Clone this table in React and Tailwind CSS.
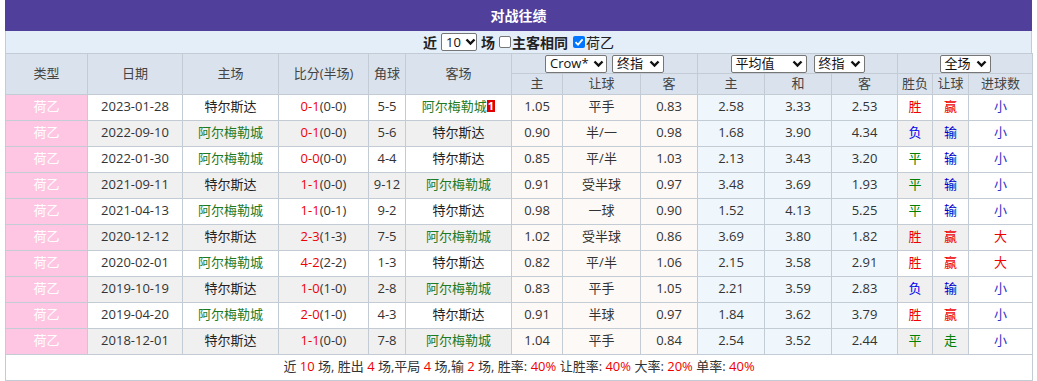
import React from 'react';

const rows = [
    ['2023-01-28', '特尔斯达', '0-1', '(0-0)', '5-5', '阿尔梅勒城', '1.05', '平手', '0.83', '2.58', '3.33', '2.53', '胜', '赢', '小', true],
    ['2022-09-10', '阿尔梅勒城', '0-1', '(0-0)', '5-6', '特尔斯达', '0.90', '半/一', '0.98', '1.68', '3.90', '4.34', '负', '输', '小'],
    ['2022-01-30', '阿尔梅勒城', '0-0', '(0-0)', '4-4', '特尔斯达', '0.85', '平/半', '1.03', '2.13', '3.43', '3.20', '平', '输', '小'],
    ['2021-09-11', '特尔斯达', '1-1', '(0-0)', '9-12', '阿尔梅勒城', '0.91', '受半球', '0.97', '3.48', '3.69', '1.93', '平', '输', '小'],
    ['2021-04-13', '阿尔梅勒城', '1-1', '(0-1)', '9-2', '特尔斯达', '0.98', '一球', '0.90', '1.52', '4.13', '5.25', '平', '输', '小'],
    ['2020-12-12', '特尔斯达', '2-3', '(1-3)', '7-5', '阿尔梅勒城', '1.02', '受半球', '0.86', '3.69', '3.80', '1.82', '胜', '赢', '大'],
    ['2020-02-01', '阿尔梅勒城', '4-2', '(2-2)', '1-3', '特尔斯达', '0.82', '平/半', '1.06', '2.15', '3.58', '2.91', '胜', '赢', '大'],
    ['2019-10-19', '特尔斯达', '1-0', '(1-0)', '2-8', '阿尔梅勒城', '0.83', '平手', '1.05', '2.21', '3.59', '2.83', '负', '输', '小'],
    ['2019-04-20', '阿尔梅勒城', '2-0', '(1-0)', '4-3', '特尔斯达', '0.91', '半球', '0.97', '1.84', '3.62', '3.79', '胜', '赢', '小'],
    ['2018-12-01', '特尔斯达', '1-1', '(0-0)', '7-8', '阿尔梅勒城', '1.04', '平手', '0.84', '2.54', '3.52', '2.44', '平', '走', '小'],
];

const widths = [82, 95, 96, 90, 37, 106, 51, 78, 57, 67, 67, 66, 35, 36, 64];

const resultColor = {
    '胜': 'text-[#ee0000]',
    '赢': 'text-[#ee0000]',
    '负': 'text-[#0000ee]',
    '输': 'text-[#0000cc]',
    '平': 'text-[#008000]',
    '走': 'text-[#008000]',
    '大': 'text-[#ee0000]',
    '小': 'text-[#3333cc]',
};

const Chevron = () => (
    <svg width="11" height="8" viewBox="0 0 11 8" className="ml-1 shrink-0">
        <polyline points="1.5,1.5 5.5,5.5 9.5,1.5" fill="none" stroke="#111" strokeWidth="2.4"/>
    </svg>
);

const Select = ({label, className = ''}) => (
    <span className={"inline-flex items-center justify-between h-[18px] pl-1 pr-[3px] bg-white border border-[#767676] rounded-[2px] text-[13px] leading-none text-[#111] align-middle " + className}>
        {label}<Chevron/>
    </span>
);

const Team = ({name}) => (
    <span className={name === '阿尔梅勒城' ? 'text-[#1f7a1f]' : 'text-[#222]'}>{name}</span>
);

const App = () => {
    const td = "border border-[#c3cbd4] text-center p-0";
    return (
        <div className="w-[1037px] h-[381px] bg-white pl-[5px] pr-[5px]" style={{fontFamily: '"Open Sans", "Noto Sans CJK SC", sans-serif'}}>
            <div className="w-[1027px] h-[31px] bg-[#51409b] flex items-center justify-center text-white font-bold text-[14px]">
                对战往绩
            </div>
            <div className="w-[1027px] h-[22px] bg-[#e3eef9] flex items-center justify-center text-[14px] text-[#222] border-x border-[#c3cbd4]">
                <span className="font-bold">近</span>
                <Select label="10" className="mx-1 w-[36px] h-[17px]"/>
                <span className="font-bold">场</span>
                <span className="ml-[4px] mr-[1px] w-[12px] h-[12px] border border-[#767676] rounded-[2px] bg-white"></span>
                <span className="font-bold">主客相同</span>
                <span className="ml-[5px] mr-[1px] w-[12px] h-[12px] rounded-[2px] bg-[#0075ff] flex items-center justify-center">
                    <svg width="10" height="10" viewBox="0 0 10 10">
                        <polyline points="1.5,5.2 4,7.6 8.6,2.4" fill="none" stroke="#fff" strokeWidth="1.8"/>
                    </svg>
                </span>
                <span>荷乙</span>
            </div>
            <table className="table-fixed border-collapse w-[1027px] text-[13px] text-[#333]">
                <colgroup>
                    {widths.map((w, i) => <col key={i} style={{width: w}}/>)}
                </colgroup>
                <thead>
                <tr className="h-[20px] bg-[#dae3ed] text-[#444]">
                    <th rowSpan={2} className={td + " font-normal"}>类型</th>
                    <th rowSpan={2} className={td + " font-normal"}>日期</th>
                    <th rowSpan={2} className={td + " font-normal"}>主场</th>
                    <th rowSpan={2} className={td + " font-normal"}>比分(半场)</th>
                    <th rowSpan={2} className={td + " font-normal"}>角球</th>
                    <th rowSpan={2} className={td + " font-normal"}>客场</th>
                    <th colSpan={3} className={td + " font-normal"}>
                        <div className="flex items-center justify-center gap-[5px]">
                            <Select label="Crow*" className="w-[62px]"/>
                            <Select label="终指" className="w-[52px]"/>
                        </div>
                    </th>
                    <th colSpan={3} className={td + " font-normal"}>
                        <div className="flex items-center justify-center gap-[7px]">
                            <Select label="平均值" className="w-[76px]"/>
                            <Select label="终指" className="w-[51px]"/>
                        </div>
                    </th>
                    <th colSpan={3} className={td + " font-normal"}>
                        <div className="flex items-center justify-center">
                            <Select label="全场" className="w-[51px]"/>
                        </div>
                    </th>
                </tr>
                <tr className="h-[19px] bg-[#dae3ed] text-[#444]">
                    {['主', '让球', '客', '主', '和', '客', '胜负', '让球', '进球数'].map((h, i) => (
                        <th key={i} className={td + " font-normal"}>{h}</th>
                    ))}
                </tr>
                </thead>
                <tbody>
                {rows.map((r, i) => {
                    const bg = i % 2 === 0 ? 'bg-white' : 'bg-[#f0f0f0]';
                    return (
                        <tr key={i} className="h-[26px]">
                            <td className={td + " bg-[#ffc6e3] text-white"}>荷乙</td>
                            <td className={td + " " + bg}>{r[0]}</td>
                            <td className={td + " " + bg}><Team name={r[1]}/></td>
                            <td className={td + " " + bg}>
                                <span className="text-[#ee0000]">{r[2]}</span>{r[3]}
                            </td>
                            <td className={td + " " + bg}>{r[4]}</td>
                            <td className={td + " " + bg}>
                                <Team name={r[5]}/>
                                {r[15] && (
                                    <span className="inline-block align-[1px] bg-[#e00000] text-white font-bold text-[11px] leading-[12px] px-[1px]">1</span>
                                )}
                            </td>
                            <td className={td + " bg-[#fdf9f6]"}>{r[6]}</td>
                            <td className={td + " bg-[#fdf9f6]"}>{r[7]}</td>
                            <td className={td + " bg-[#fdf9f6]"}>{r[8]}</td>
                            <td className={td + " bg-[#f0f7fc]"}>{r[9]}</td>
                            <td className={td + " bg-[#f0f7fc]"}>{r[10]}</td>
                            <td className={td + " bg-[#f0f7fc]"}>{r[11]}</td>
                            <td className={td + " " + bg + " " + resultColor[r[12]]}>{r[12]}</td>
                            <td className={td + " " + bg + " " + resultColor[r[13]]}>{r[13]}</td>
                            <td className={td + " bg-white " + resultColor[r[14]]}>{r[14]}</td>
                        </tr>
                    );
                })}
                <tr className="h-[26px]">
                    <td colSpan={15} className={td + " bg-white text-[13px] text-[#333]"}>
                        近 <span className="text-[#ee0000]">10</span> 场, 胜出 <span className="text-[#ee0000]">4</span> 场,平局 <span className="text-[#ee0000]">4</span> 场,输 <span className="text-[#ee0000]">2</span> 场, 胜率: <span className="text-[#ee0000]">40%</span> 让胜率: <span className="text-[#ee0000]">40%</span> 大率: <span className="text-[#ee0000]">20%</span> 单率: <span className="text-[#ee0000]">40%</span>
                    </td>
                </tr>
                </tbody>
            </table>
        </div>
    );
};

export default App;
